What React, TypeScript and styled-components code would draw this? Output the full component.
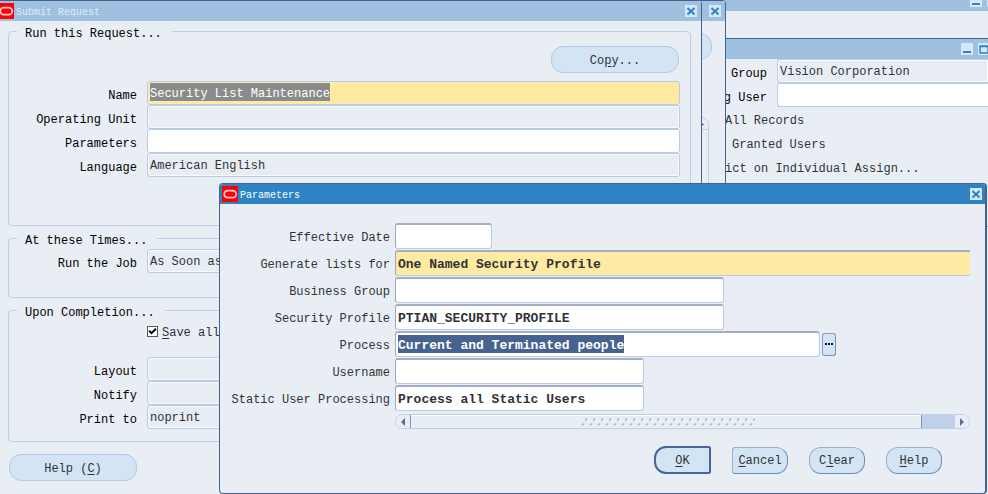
import React, { useId } from "react";
import styled, { createGlobalStyle, css } from "styled-components";

const GlobalStyle = createGlobalStyle`
  * { box-sizing: border-box; }
  html, body, #root { height: 100%; }
  body { margin: 0; overflow: hidden; background: #e9eef4; }
  body, button, input {
    font-family: "Liberation Mono", "DejaVu Sans Mono", monospace;
    font-size: 12px;
    line-height: 16px;
    color: #2f3338;
  }
  u { text-underline-offset: 2px; }
`;

const Desktop = styled.main`
  position: relative;
  height: 100%;
  min-height: 494px;
  overflow: hidden;
`;

const Win = styled.section`
  position: absolute;
  display: flex;
  flex-direction: column;
  background: #e9eef4;
  border-top: 1px solid #43628f;
`;

const HostWindow = styled(Win)`
  top: -9px;
  left: 0;
  right: 0;
  bottom: 0;
  border-top: 0;
`;

const ProfileWindow = styled(Win)`
  top: 38px;
  right: 0;
  width: 263px;
  min-height: 189px;
  border-bottom: 1px solid #9db6d6;
`;

const BackRequestWindow = styled(Win)`
  top: 0;
  left: 0;
  right: 262px;
  min-height: 100%;
  border-right: 1px solid #43628f;
  border-top-right-radius: 4px;
`;

const RequestWindow = styled(Win)`
  top: 0;
  left: 0;
  right: 286px;
  min-height: 100%;
  border-right: 1px solid #43628f;
  border-top-right-radius: 4px;
`;

const ParametersWindow = styled(Win)`
  top: 183px;
  left: 219px;
  right: 1px;
  border: 1px solid #43628f;
  border-right-width: 2px;
  border-radius: 4px;
  overflow: hidden;
`;

const TitleBar = styled.header<{ $active?: boolean; $indent?: number; $end?: number }>`
  display: flex;
  align-items: center;
  gap: 2px;
  height: 20px;
  flex: none;
  overflow: hidden;
  padding-left: ${(p) => p.$indent ?? 0}px;
  padding-right: ${(p) => p.$end ?? 4}px;
  background: ${(p) => (p.$active ? "#2d83c4" : "#9fc0df")};
  color: ${(p) => (p.$active ? "#ffffff" : "#dcebf7")};
`;

const Title = styled.h1`
  margin: 0;
  padding-top: 4px;
  font-size: 10px;
  line-height: 16px;
  font-weight: 400;
  flex: 1;
`;

const WinButtons = styled.div<{ $overhang?: number }>`
  display: flex;
  gap: 5px;
  margin-left: auto;
  margin-right: -${(p) => p.$overhang ?? 0}px;
`;

const WinButton = styled.button`
  display: block;
  width: 12px;
  height: 12px;
  padding: 0;
  border: 0;
  background: #d4e9f8;
  flex: none;
  svg { display: block; }
`;

const Logo = ({ clipped }: { clipped?: boolean }) => (
  <svg width={clipped ? 14 : 16} height="16" viewBox={clipped ? "2 0 14 16" : "0 0 16 16"} aria-hidden="true">
    <rect width="16" height="16" fill="#fb0007" />
    <rect x="2.2" y="4.7" width="12" height="7" rx="3.5" fill="none" stroke="#ffd2c8" strokeWidth="1.8" />
  </svg>
);

const CloseButton = () => (
  <WinButton type="button" aria-label="Close">
    <svg width="12" height="12" viewBox="0 0 12 12">
      <path d="M2.5 3 9.5 9.5M9.5 3 2.5 9.5" stroke="#2d83c4" strokeWidth="2" />
    </svg>
  </WinButton>
);

const MinimizeButton = () => (
  <WinButton type="button" aria-label="Minimize">
    <svg width="12" height="12" viewBox="0 0 12 12">
      <path d="M2 9H10" stroke="#2d83c4" strokeWidth="2" />
    </svg>
  </WinButton>
);

const MaximizeButton = () => (
  <WinButton type="button" aria-label="Maximize">
    <svg width="12" height="12" viewBox="0 0 12 12">
      <path d="M2 3H10V10H2ZM2 3.5H10" fill="none" stroke="#2d83c4" strokeWidth="1.4" />
    </svg>
  </WinButton>
);

const PushButton = styled.button<{ $wide?: boolean; $shape?: "primary" | "flatLeft" }>`
  height: 27px;
  width: ${(p) => (p.$wide ? 128 : 56)}px;
  padding: 2px 0 0;
  white-space: nowrap;
  background: #d3e4f4;
  border: 1px solid #b3cae4;
  border-radius: 12px;
  ${(p) => !p.$wide && css`border-color: #9fafc6 #6a8cb9 #6a8cb9 #9fafc6;`}
  ${(p) => p.$shape === "flatLeft" && css`border-radius: 3px 12px 12px 3px;`}
  ${(p) =>
    p.$shape === "primary" &&
    css`
      height: 28px;
      width: 57px;
      border: 2px solid #48659a;
      border-radius: 12px 2px 2px 12px;
    `}
`;

/* Submit Request form */

const RequestBody = styled.form`
  display: flex;
  flex-direction: column;
  gap: 2px;
  padding: 0 10px 12px 8px;
`;

const Group = styled.fieldset<{ $bottom: number }>`
  margin: 0;
  padding: 1px 10px ${(p) => p.$bottom}px 0;
  min-width: 0;
  border: 1px solid #bdd0e7;
  border-radius: 4px;
`;

const Legend = styled.legend`
  margin-left: 8px;
  padding: 5px 10px 0 8px;
  height: 20px;
  color: #000;
`;

const GroupActions = styled.div`
  display: flex;
  justify-content: flex-end;
  padding: 4px 1px 8px 0;
`;

const FooterActions = styled.div`
  display: flex;
  padding: 10px 0 0 1px;
`;

const Row = styled.div`
  display: grid;
  grid-template-columns: 128px minmax(0, 1fr);
  column-gap: 10px;
  align-items: center;
`;

const Label = styled.label`
  padding-top: 5px;
  text-align: right;
  white-space: nowrap;
  color: #000;
`;

const Input = styled.input<{ $tone?: "required" | "disabled"; $mark?: number }>`
  display: block;
  width: 100%;
  height: 24px;
  padding: 1px 2px 0;
  border: 1px solid #b8cce5;
  border-radius: 3px;
  outline: 0;
  background-color: ${(p) => (p.$tone === "required" ? "#ffeaa3" : p.$tone === "disabled" ? "#e8edf4" : "#fff")};
  ${(p) => p.$tone === "disabled" && css`box-shadow: inset 0 0 0 1px #f8fafc;`}
  ${(p) =>
    p.$mark &&
    css`
      color: #fff;
      background-image: linear-gradient(#8b8b8b, #8b8b8b);
      background-repeat: no-repeat;
      background-position: 2px 1px;
      background-size: ${p.$mark}ch 18px;
    `}
`;

const CheckRow = styled.div`
  display: flex;
  align-items: center;
  gap: 4px;
  padding: 0 0 16px 138px;
  label { padding-top: 4px; }
`;

const CheckBox = styled.input`
  appearance: none;
  width: 11px;
  height: 11px;
  margin: 0;
  border: 1px solid #55585c;
  background: #fff;
  &:checked {
    background: #fff
      url("data:image/svg+xml,%3Csvg xmlns='http://www.w3.org/2000/svg' viewBox='0 0 9 9'%3E%3Cpath d='M1.2 3.8 3.5 6.2 8 1.8' fill='none' stroke='black' stroke-width='2'/%3E%3C/svg%3E");
  }
`;

interface FieldProps {
  label: string;
  value?: string;
  tone?: "required" | "disabled";
  marked?: boolean;
}

const Field = ({ label, value = "", tone, marked }: FieldProps) => {
  const id = useId();
  return (
    <Row>
      <Label htmlFor={id}>{label}</Label>
      <Input
        id={id}
        defaultValue={value}
        readOnly={tone === "disabled"}
        $tone={tone}
        $mark={marked ? value.length : undefined}
        spellCheck={false}
      />
    </Row>
  );
};

/* Security profile form behind the dialogs */

const ProfileBody = styled.div`
  display: flex;
  flex-direction: column;
`;

const ProfileRow = styled.div`
  display: grid;
  grid-template-columns: 42px minmax(0, 1fr);
  column-gap: 10px;
  align-items: center;
  label { justify-self: end; }
`;

const ProfileInput = styled(Input)`
  border-right: 0;
  border-radius: 3px 0 0 3px;
`;

const Option = styled.div<{ $indent?: boolean }>`
  height: 24px;
  padding: 6px 0 0 ${(p) => (p.$indent ? 7 : 0)}px;
  white-space: nowrap;
`;

/* Edge of the second request window */

const EdgeBody = styled.div`
  display: flex;
  flex-direction: column;
  align-items: flex-end;
  flex: 1;
  padding: 12px 13px 0 0;
`;

const EdgeScroll = styled.div`
  width: 18px;
  flex: 1;
  margin: 57px 3px 0 0;
  border: 1px solid #bdd0e7;
  border-radius: 8px 8px 0 0;
  svg { display: block; border-bottom: 1px solid #bdd0e7; }
`;

/* Parameters dialog */

const ParamBody = styled.form`
  display: flex;
  flex-direction: column;
  padding: 19px 15px 19px 10px;
`;

const ParamGrid = styled.div`
  display: grid;
  grid-template-columns: 160px minmax(0, 1fr);
  column-gap: 5px;
  row-gap: 1px;
  align-items: center;
`;

const ParamLabel = styled.label`
  padding-top: 3px;
  text-align: right;
  white-space: nowrap;
`;

const ParamCell = styled.div`
  display: flex;
  align-items: center;
  gap: 2px;
`;

const ParamInput = styled.input<{ $width?: number; $mark?: number }>`
  width: ${(p) => (p.$width ? `${p.$width}px` : "100%")};
  height: 26px;
  padding: 1px 2px 0;
  font-size: 13px;
  font-weight: 700;
  outline: 0;
  border: 1px solid #b8cce5;
  border-top: 2px solid #a3afc4;
  border-left: 1px solid #98a9c4;
  border-radius: 3px;
  background-color: #fff;
  ${(p) =>
    !p.$width &&
    css`
      background-color: #ffeaa3;
      border-right: 0;
      border-radius: 3px 0 0 3px;
    `}
  ${(p) =>
    p.$mark &&
    css`
      color: #fff;
      background-image: linear-gradient(#46638f, #46638f);
      background-repeat: no-repeat;
      background-position: 2px 2px;
      background-size: ${p.$mark}ch 18px;
    `}
`;

const LookupButton = styled.button`
  width: 14px;
  height: 23px;
  padding: 0;
  background: #d3e4f4;
  border: 1px solid #6f93bf;
  border-color: #8d9db8 #6f93bf #6f93bf #8d9db8;
  border-radius: 3px;
  svg { display: block; }
`;

const ScrollBar = styled.div`
  display: flex;
  height: 15px;
  margin: 3px 0 0 165px;
  border: 1px solid #bdd0e7;
  border-radius: 8px;
  overflow: hidden;
`;

const ScrollArrow = styled.button`
  width: 14px;
  padding: 0;
  border: 0;
  background: #e9eef4;
  svg { display: block; }
`;

const ScrollTrack = styled.div`
  display: flex;
  flex: 1;
  background: #bfd1e8;
`;

const ScrollThumb = styled.div`
  display: flex;
  justify-content: center;
  width: 94%;
  padding-left: 4px;
  background: #e9eef4;
  border: 1px solid #7f95b9;
  border-width: 0 1px;
  box-shadow: inset 0 1px #fff;
`;

const DialogActions = styled.div`
  display: flex;
  justify-content: flex-end;
  align-items: center;
  gap: 21px;
  padding: 17px 28px 0 0;
`;

const Grip = () => {
  const columns = Array.from({ length: 22 }, (_, i) => i * 8);
  return (
    <svg width="174" height="13" viewBox="0 0 174 13" aria-hidden="true">
      {columns.map((x) => (
        <path
          key={x}
          d={`M${x + 1} 10.5l2-2M${x + 4} 5.5l2-2`}
          stroke="#a9b4ca"
          strokeWidth="1.3"
        />
      ))}
    </svg>
  );
};

const parameters: { label: string; value?: string; width?: number; marked?: boolean }[] = [
  { label: "Effective Date", width: 97 },
  { label: "Generate lists for", value: "One Named Security Profile" },
  { label: "Business Group", width: 329 },
  { label: "Security Profile", value: "PTIAN_SECURITY_PROFILE", width: 329 },
  { label: "Process", value: "Current and Terminated people", width: 425, marked: true },
  { label: "Username", width: 249 },
  { label: "Static User Processing", value: "Process all Static Users", width: 249 },
];

const ParametersDialog = () => (
  <ParametersWindow role="dialog" aria-label="Parameters">
    <TitleBar $active $indent={2} $end={3}>
      <Logo />
      <Title>Parameters</Title>
      <CloseButton />
    </TitleBar>
    <ParamBody>
      <ParamGrid>
        {parameters.map(({ label, value = "", width, marked }, i) => (
          <React.Fragment key={label}>
            <ParamLabel htmlFor={`param-${i}`}>{label}</ParamLabel>
            <ParamCell>
              <ParamInput
                id={`param-${i}`}
                defaultValue={value}
                spellCheck={false}
                $width={width}
                $mark={marked ? value.length : undefined}
              />
              {marked && (
                <LookupButton type="button" aria-label="List of values">
                  <svg width="12" height="21" viewBox="0 0 12 21">
                    <path d="M2 9h2v2H2zM5 9h2v2H5zM8 9h2v2H8z" fill="#200a10" />
                  </svg>
                </LookupButton>
              )}
            </ParamCell>
          </React.Fragment>
        ))}
      </ParamGrid>
      <ScrollBar>
        <ScrollArrow type="button" aria-label="Scroll left">
          <svg width="14" height="13" viewBox="0 0 14 13">
            <path d="M9 3v8L5 7z" fill="#5f6d92" />
          </svg>
        </ScrollArrow>
        <ScrollTrack>
          <ScrollThumb>
            <Grip />
          </ScrollThumb>
        </ScrollTrack>
        <ScrollArrow type="button" aria-label="Scroll right">
          <svg width="14" height="13" viewBox="0 0 14 13">
            <path d="M5 3v8L9 7z" fill="#5f6d92" />
          </svg>
        </ScrollArrow>
      </ScrollBar>
      <DialogActions>
        <PushButton type="button" $shape="primary"><u>O</u>K</PushButton>
        <PushButton type="button" $shape="flatLeft"><u>C</u>ancel</PushButton>
        <PushButton type="button">C<u>l</u>ear</PushButton>
        <PushButton type="button"><u>H</u>elp</PushButton>
      </DialogActions>
    </ParamBody>
  </ParametersWindow>
);

const SubmitRequest = () => (
  <RequestWindow aria-label="Submit Request">
    <TitleBar>
      <Logo clipped />
      <Title>Submit Request</Title>
      <CloseButton />
    </TitleBar>
    <RequestBody>
      <Group $bottom={48}>
        <Legend>Run this Request...</Legend>
        <GroupActions>
          <PushButton type="button" $wide>Co<u>p</u>y...</PushButton>
        </GroupActions>
        <Field label="Name" value="Security List Maintenance" tone="required" marked />
        <Field label="Operating Unit" tone="disabled" />
        <Field label="Parameters" />
        <Field label="Language" value="American English" tone="disabled" />
      </Group>
      <Group $bottom={24}>
        <Legend>At these Times...</Legend>
        <Field label="Run the Job" value="As Soon as" tone="disabled" />
      </Group>
      <Group $bottom={12}>
        <Legend>Upon Completion...</Legend>
        <CheckRow>
          <CheckBox id="save-output" type="checkbox" defaultChecked />
          <label htmlFor="save-output"><u>S</u>ave all</label>
        </CheckRow>
        <Field label="Layout" tone="disabled" />
        <Field label="Notify" tone="disabled" />
        <Field label="Print to" value="noprint" tone="disabled" />
      </Group>
      <FooterActions>
        <PushButton type="button" $wide>Help (<u>C</u>)</PushButton>
      </FooterActions>
    </RequestBody>
  </RequestWindow>
);

export default function App() {
  return (
    <>
      <GlobalStyle />
      <Desktop>
        <HostWindow>
          <TitleBar $end={0}>
            <WinButtons $overhang={11}>
              <MinimizeButton />
              <WinButton type="button" aria-label="Restore" />
            </WinButtons>
          </TitleBar>
        </HostWindow>
        <ProfileWindow>
          <TitleBar $end={0}>
            <WinButtons $overhang={2}>
              <MinimizeButton />
              <MaximizeButton />
            </WinButtons>
          </TitleBar>
          <ProfileBody>
            <ProfileRow>
              <Label htmlFor="group">Group</Label>
              <ProfileInput id="group" defaultValue="Vision Corporation" readOnly $tone="disabled" />
            </ProfileRow>
            <ProfileRow>
              <Label htmlFor="user">g User</Label>
              <ProfileInput id="user" />
            </ProfileRow>
            <Option>All Records</Option>
            <Option $indent>Granted Users</Option>
            <Option>ict on Individual Assign...</Option>
          </ProfileBody>
        </ProfileWindow>
        <BackRequestWindow>
          <TitleBar>
            <WinButtons>
              <CloseButton />
            </WinButtons>
          </TitleBar>
          <EdgeBody>
            <PushButton type="button" $wide aria-label="Copy" />
            <EdgeScroll>
              <svg width="16" height="12" viewBox="0 0 16 12" aria-hidden="true">
                <path d="M5 8h8L9 4z" fill="#5f6d92" />
              </svg>
            </EdgeScroll>
          </EdgeBody>
        </BackRequestWindow>
        <SubmitRequest />
        <ParametersDialog />
      </Desktop>
    </>
  );
}
